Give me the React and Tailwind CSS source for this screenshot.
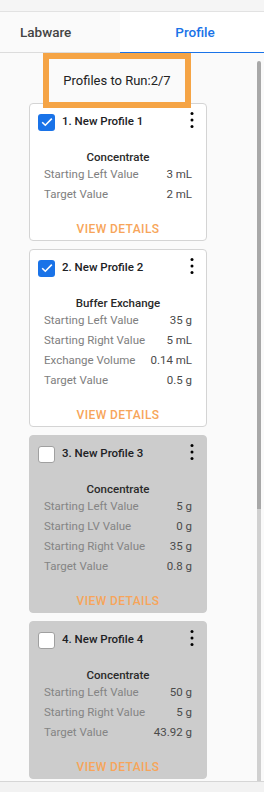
import React, { useState } from 'react'

const profiles = [
  {
    id: 1,
    name: '1. New Profile 1',
    type: 'Concentrate',
    checked: true,
    rows: [
      ['Starting Left Value', '3 mL'],
      ['Target Value', '2 mL'],
    ],
  },
  {
    id: 2,
    name: '2. New Profile 2',
    type: 'Buffer Exchange',
    checked: true,
    rows: [
      ['Starting Left Value', '35 g'],
      ['Starting Right Value', '5 mL'],
      ['Exchange Volume', '0.14 mL'],
      ['Target Value', '0.5 g'],
    ],
  },
  {
    id: 3,
    name: '3. New Profile 3',
    type: 'Concentrate',
    checked: false,
    rows: [
      ['Starting Left Value', '5 g'],
      ['Starting LV Value', '0 g'],
      ['Starting Right Value', '35 g'],
      ['Target Value', '0.8 g'],
    ],
  },
  {
    id: 4,
    name: '4. New Profile 4',
    type: 'Concentrate',
    checked: false,
    rows: [
      ['Starting Left Value', '50 g'],
      ['Starting Right Value', '5 g'],
      ['Target Value', '43.92 g'],
    ],
  },
]

function Kebab() {
  return (
    <svg width="6" height="18" viewBox="0 0 6 18" className="text-black">
      <circle cx="3" cy="2.5" r="1.5" fill="currentColor" />
      <circle cx="3" cy="9" r="1.5" fill="currentColor" />
      <circle cx="3" cy="15.5" r="1.5" fill="currentColor" />
    </svg>
  )
}

function Checkbox({ checked, onChange }) {
  return (
    <button
      onClick={onChange}
      className={`w-[17px] h-[17px] rounded-[3px] flex items-center justify-center shrink-0 ${
        checked ? 'bg-[#1a73e8]' : 'bg-white border border-[#a0a0a0]'
      }`}
    >
      {checked && (
        <svg width="12" height="10" viewBox="0 0 12 10">
          <path d="M1.2 5.2 L4.3 8.2 L10.8 1.6" fill="none" stroke="white" strokeWidth="1.6" />
        </svg>
      )}
    </button>
  )
}

function ProfileCard({ profile, onToggle }) {
  const active = profile.checked
  return (
    <div
      className={`w-[178px] rounded-[4px] border ${
        active ? 'bg-white border-[#d4d4d4]' : 'bg-[#cccccc] border-[#cccccc]'
      }`}
    >
      {/* Header */}
      <div className="h-[36px] flex items-center pl-[8px] pr-[11px]">
        <Checkbox checked={profile.checked} onChange={onToggle} />
        <span className="ml-[7px] text-[11.5px] font-medium text-[#202124] flex-1">{profile.name}</span>
        <div className="-mt-[5px]">
          <Kebab />
        </div>
      </div>

      {/* Body */}
      <div className="mt-[9px] text-center text-[11.5px] leading-[16px] font-medium text-[#2a2a2a]">
        {profile.type}
      </div>
      <div className="px-[14px]">
        {profile.rows.map(([label, value]) => (
          <div key={label} className="flex justify-between h-[20px] items-center text-[11.5px]">
            <span className={active ? 'text-[#7e7e7e]' : 'text-[#848484]'}>{label}</span>
            <span className="text-[#4a4a4a]">{value}</span>
          </div>
        ))}
      </div>

      <div className="mt-[16px] pb-[3px] text-center text-[12px] leading-[16px] font-medium tracking-[0.4px] text-[#f7a55a]">
        VIEW DETAILS
      </div>
    </div>
  )
}

export default function App() {
  const [items, setItems] = useState(profiles)
  const [tab, setTab] = useState('profile')

  const toggle = (id) => {
    setItems(items.map(p => (p.id === id ? { ...p, checked: !p.checked } : p)))
  }

  const selected = items.filter(p => p.checked).length

  return (
    <div className="w-[264px] h-[792px] flex flex-col bg-[#fafafa] overflow-hidden font-['Roboto',sans-serif]">
      {/* Top strip */}
      <div className="h-[12px] bg-[#f5f5f5] border-b border-[#e2e2e2] shrink-0" />

      {/* Tabs */}
      <div className="h-[41px] flex shrink-0">
        <button
          onClick={() => setTab('labware')}
          className="w-[120px] bg-[#fafafa] border-b border-[#dcdcdc] text-left pl-[20px] text-[13.5px] font-medium text-[#444]"
        >
          Labware
        </button>
        <button
          onClick={() => setTab('profile')}
          className="flex-1 bg-white border-b border-[#1a73e8] text-center pl-[6px] text-[13.5px] font-medium text-[#1a73e8]"
        >
          Profile
        </button>
      </div>

      {/* Content */}
      <div className="flex-1 flex min-h-0">
        <div className="w-[257px] overflow-hidden flex flex-col pl-[29px]">
          <div className="mt-[6px] ml-[20px] w-[136px] h-[43px] shrink-0 flex items-center justify-center outline-[6px] outline-solid outline-[#f5a445] text-[13px] text-[#222] relative z-10">
            Profiles to Run:{selected}/{items.length + 3}
          </div>
          <div className="mt-[1px] flex flex-col gap-[8px]">
            {items.map(p => (
              <ProfileCard key={p.id} profile={p} onToggle={() => toggle(p.id)} />
            ))}
          </div>
        </div>

        {/* Scrollbar */}
        <div className="w-[4px] flex flex-col pt-[8px]">
          <div className="h-[448px] bg-[#a8a8a8] rounded-t-full" />
          <div className="flex-1 bg-[#d0d0d0]" />
        </div>
      </div>

      {/* Bottom strip */}
      <div className="h-[11px] bg-[#f2f2f2] border-t border-[#d6d6d6] shrink-0" />
    </div>
  )
}
